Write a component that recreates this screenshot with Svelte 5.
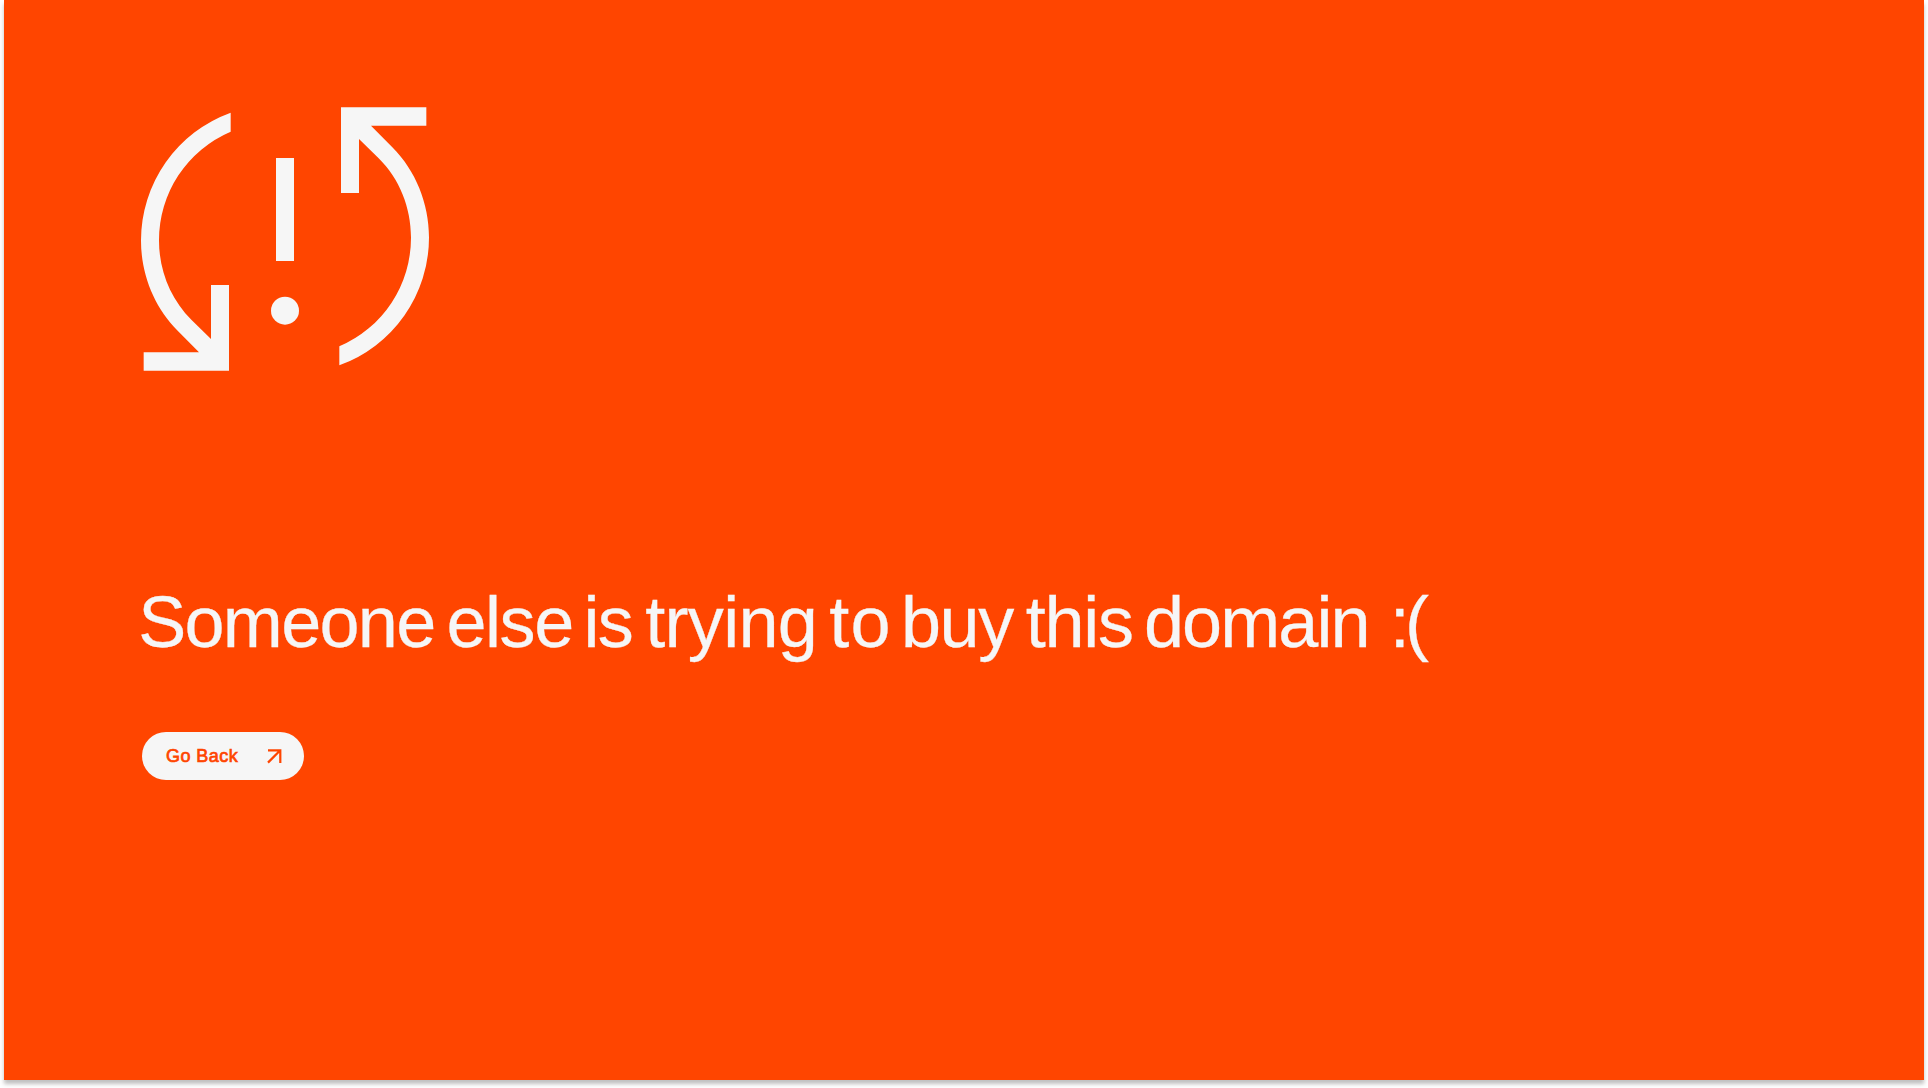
<script>
  // Each word carries its advance to the next word and its own tracking.
  const words = [
    { text: 'Someone', width: 308.2, tracking: -1.7 },
    { text: 'else', width: 137.2, tracking: -1.4 },
    { text: 'is', width: 61.7, tracking: -1.8 },
    { text: 'trying', width: 184.1, tracking: -0.7 },
    { text: 'to', width: 71.6, tracking: 1.2 },
    { text: 'buy', width: 124.7, tracking: -1.4 },
    { text: 'this', width: 118.3, tracking: -1.2 },
    { text: 'domain', width: 245.8, tracking: -1.9 },
    { text: ':(', width: 50, tracking: -4.6 }
  ];
</script>

<main class="panel">
  <svg class="status" viewBox="0 0 930 870" role="img" aria-label="Conflict">
    <defs>
      <path
        id="sweep"
        d="M302 53A408 408 0 0 0 33 437C33 538 73 637 143 707L207 772H41V827H297V570H243V732L184 674C122 613 87 526 87 437A354 354 0 0 1 302 110Z"
      />
    </defs>
    <use href="#sweep" />
    <use href="#sweep" transform="rotate(180 465 432)" />
    <rect x="438" y="189" width="54" height="309" />
    <circle cx="465" cy="647" r="42" />
  </svg>

  <h1>
    {#each words as word}
      <span style:width="{word.width}px" style:letter-spacing="{word.tracking}px">{word.text}</span>
    {/each}
  </h1>

  <button type="button">
    <span>Go Back</span>
    <svg viewBox="0 0 16 16" aria-hidden="true">
      <path d="M1 2.3H13.3V15M13.3 2.3L1 14.6" />
    </svg>
  </button>
</main>

<style>
  :global(body) {
    margin: 0;
    background: #fff;
    overflow: hidden;
  }

  .panel {
    box-sizing: border-box;
    width: 1920px;
    height: 1080px;
    margin: 0 4px 8px;
    padding: 95px 126px 0;
    background: #ff4500;
    box-shadow: 0 4px 4px rgba(0, 0, 0, 0.25);
    font-family: 'Liberation Sans', Arial, sans-serif;
  }

  .status {
    display: block;
    width: 310px;
    height: 290px;
    fill: #f6f6f6;
  }

  h1 {
    display: flex;
    margin: 194px 0 0 8.2px;
    color: #f6f6f6;
    font-size: 72px;
    font-weight: 400;
    line-height: 86px;
    font-kerning: none;
    white-space: nowrap;
    -webkit-text-stroke: 0.3px #f6f6f6;
  }

  h1 span {
    flex: none;
  }

  button {
    display: flex;
    align-items: center;
    justify-content: space-between;
    box-sizing: border-box;
    width: 162px;
    height: 48px;
    margin: 67px 0 0 12px;
    padding: 1px 21px 0 24px;
    border: 0;
    border-radius: 24px;
    background: #f6f6f6;
    color: #ff4500;
    font: 400 18px/25px 'Liberation Sans', Arial, sans-serif;
    letter-spacing: 0.45px;
    -webkit-text-stroke: 0.7px #ff4500;
  }

  button svg {
    width: 16px;
    height: 16px;
    margin-bottom: 1px;
    fill: none;
    stroke: #ff4500;
    stroke-width: 2.2;
  }
</style>
